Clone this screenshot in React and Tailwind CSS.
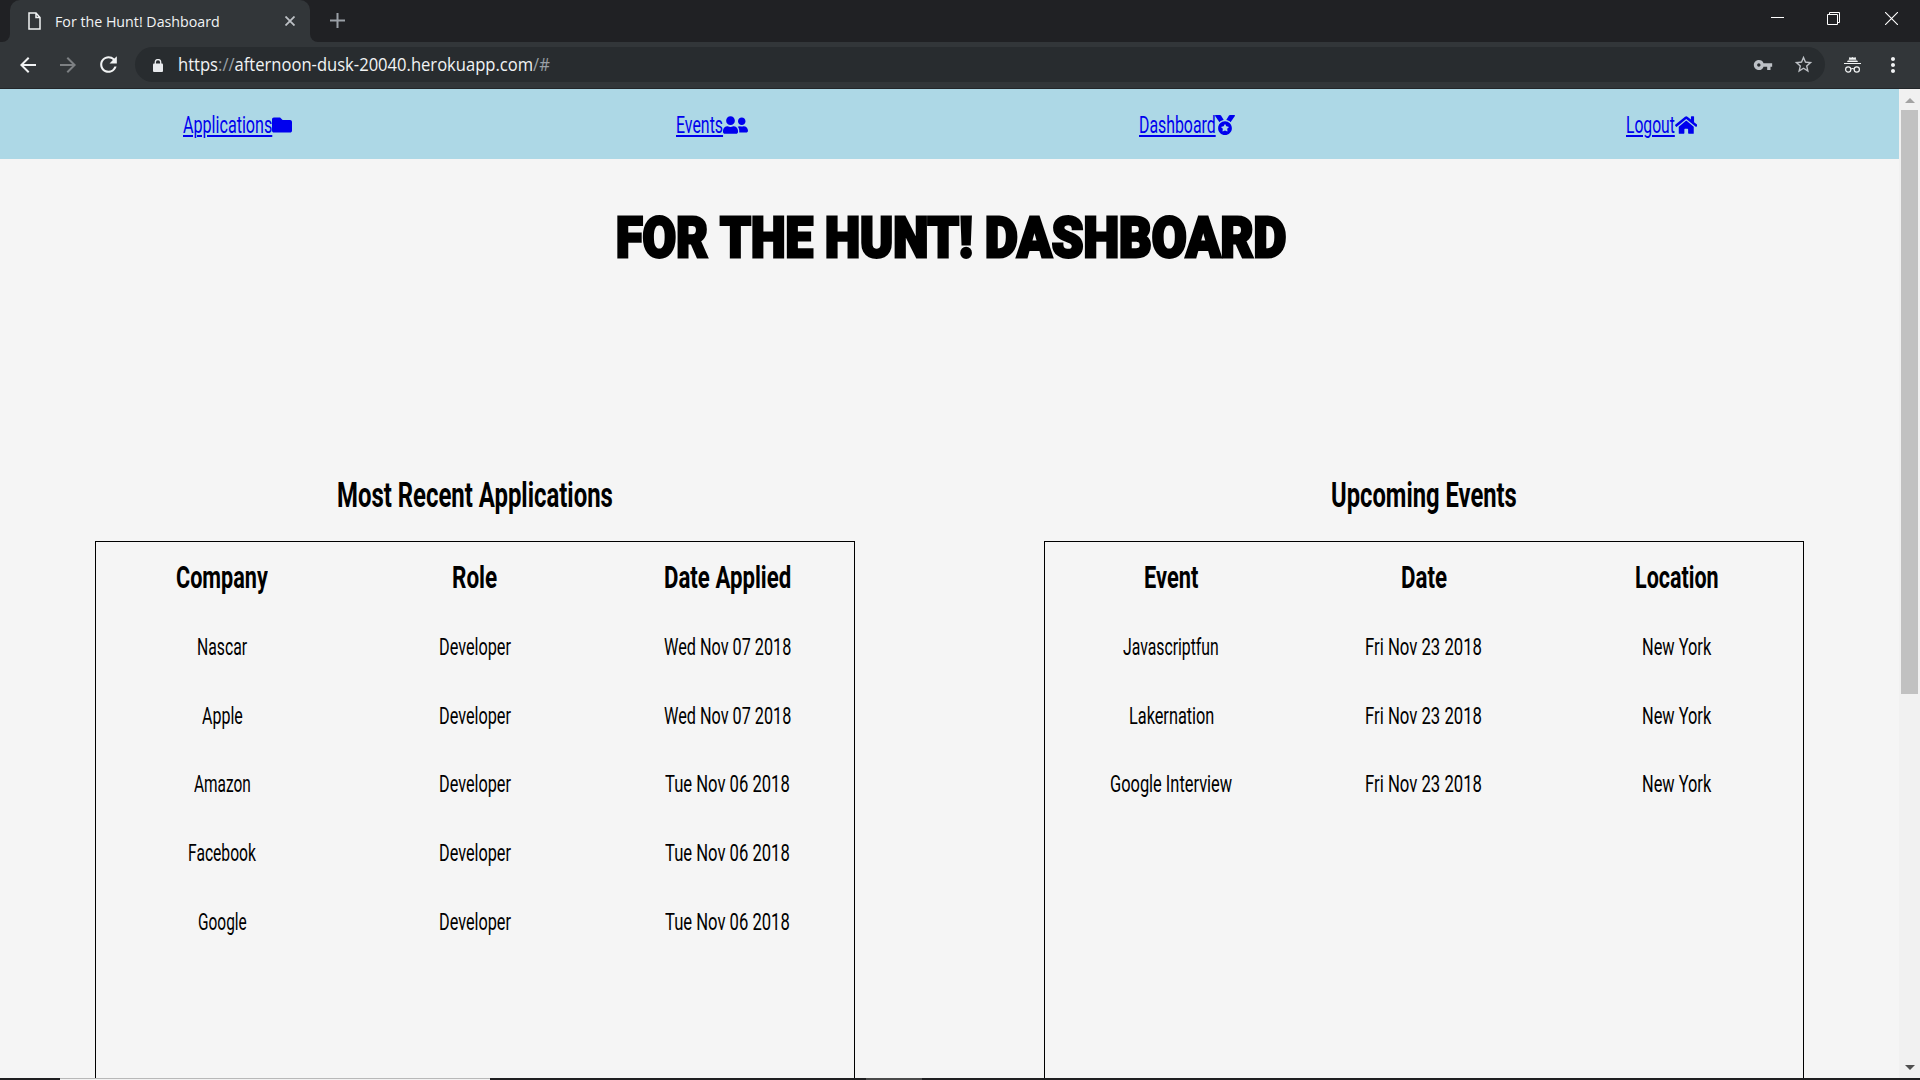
import { useLayoutEffect, useRef, useState } from "react";
import { FaFolder, FaUserFriends, FaMedal, FaHome } from "react-icons/fa";
import { MdVpnKey, MdStarBorder, MdMoreVert, MdArrowBack, MdArrowForward, MdRefresh } from "react-icons/md";

// Condenses a run of text horizontally so that it fills the given width.
function Fit({ width, className = "", children }) {
  const ref = useRef(null);
  const [scale, setScale] = useState(1);
  useLayoutEffect(() => {
    const measure = () => setScale(width / ref.current.offsetWidth);
    measure();
    document.fonts?.ready.then(measure);
  }, [width]);
  return (
    <span className="inline-block shrink-0 whitespace-nowrap" style={{ width }}>
      <span ref={ref} className={`inline-block origin-left whitespace-pre ${className}`} style={{ transform: `scaleX(${scale})` }}>
        {children}
      </span>
    </span>
  );
}

const nav = [
  { label: "Applications", width: 89, icon: <FaFolder className="-mt-[2px] h-5 w-5" /> },
  { label: "Events", width: 47, icon: <FaUserFriends className="-mt-[2px] h-5 w-[25px]" /> },
  { label: "Dashboard", width: 76.5, icon: <FaMedal className="-mt-[2px] h-5 w-5" /> },
  { label: "Logout", width: 49, icon: <FaHome className="-mt-[2px] h-5 w-[22.5px]" /> },
];

const dev = ["Developer", 72];
const wed = ["Wed Nov 07 2018", 127];
const tue = ["Tue Nov 06 2018", 125];
const fri = ["Fri Nov 23 2018", 117];
const ny = ["New York", 69];

const applications = {
  title: ["Most Recent Applications", 276],
  head: [["Company", 92], ["Role", 45], ["Date Applied", 127]],
  rows: [
    [["Nascar", 50], dev, wed],
    [["Apple", 41], dev, wed],
    [["Amazon", 57], dev, tue],
    [["Facebook", 68], dev, tue],
    [["Google", 49], dev, tue],
  ],
};

const events = {
  title: ["Upcoming Events", 186],
  head: [["Event", 54], ["Date", 46], ["Location", 84]],
  rows: [
    [["Javascriptfun", 96], fri, ny],
    [["Lakernation", 85], fri, ny],
    [["Google Interview", 122], fri, ny],
  ],
};

function Panel({ data }) {
  return (
    <section className="flex w-[760px] flex-col">
      <h2 className="mb-[20px] h-[50px] text-center text-[35px] font-bold leading-[50px]">
        <Fit width={data.title[1]}>{data.title[0]}</Fit>
      </h2>
      <div className="flex-1 border border-b-0 border-black">
        <div className="grid h-[71.6px] grid-cols-3 items-center pt-[1.4px] text-center text-[31.5px] font-bold leading-[40px]">
          {data.head.map(([t, w]) => (
            <div key={t}><Fit width={w}>{t}</Fit></div>
          ))}
        </div>
        {data.rows.map((row, i) => (
          <div key={i} className="grid h-[68.7px] grid-cols-3 items-center text-center text-[23px] font-[450] leading-[30px]">
            {row.map(([t, w]) => (
              <div key={t}><Fit width={w}>{t}</Fit></div>
            ))}
          </div>
        ))}
      </div>
    </section>
  );
}

function Chrome() {
  return (
    <header className="bg-[#202124] font-['Open_Sans',sans-serif]">
      <div className="flex h-[42px]">
        <div className="flex h-[42px] w-[10px] items-end bg-[#323639]"><div className="h-full w-full rounded-br-[8px] bg-[#202124]" /></div>
        <div className="flex w-[300px] items-center rounded-t-[10px] bg-[#323639] pl-[18px] text-[15px] text-[#f1f3f4]">
          <svg className="mr-[14px] h-[18px] w-[13px]" viewBox="0 0 13 18" fill="none" stroke="#f1f3f4" strokeWidth="1.5"><path d="M1 1h7l4 4.5V17H1zM8 1v4.5h4" /></svg>
          <Fit width={165} className="-mt-[3px] align-middle">For the Hunt! Dashboard</Fit>
          <svg className="ml-[65px] h-[10px] w-[10px]" viewBox="0 0 10 10" stroke="#bdc1c6" strokeWidth="1.8"><path d="M.5.5l9 9M9.5.5l-9 9" /></svg>
        </div>
        <div className="h-[42px] w-[10px] bg-[#323639]"><div className="h-full w-full rounded-bl-[8px] bg-[#202124]" /></div>
        <svg className="ml-[10px] mt-[13px] h-[15px] w-[15px]" viewBox="0 0 15 15" stroke="#9aa0a6" strokeWidth="2"><path d="M7.5 0v15M0 7.5h15" /></svg>
        <div className="ml-auto flex pr-[22px] pt-[12px]">
          <svg className="mr-[43px] h-[13px] w-[13px]" viewBox="0 0 13 13" stroke="#fff"><path d="M0 5.5h13" /></svg>
          <svg className="mr-[45px] h-[13px] w-[13px]" viewBox="0 0 13 13" fill="none" stroke="#fff"><path d="M.5 2.5h10v10H.5zM2.5 2.5v-2h10v10h-2" /></svg>
          <svg className="h-[13px] w-[13px]" viewBox="0 0 13 13" stroke="#fff" strokeWidth="1.1"><path d="M0 0l13 13M13 0L0 13" /></svg>
        </div>
      </div>
      <div className="flex h-[47px] border-b border-[#232629] bg-[#323639] pl-[16px] pt-[5px] text-[#f1f3f4]">
        <div className="flex h-[35px] w-[119px] items-center">
          <MdArrowBack className="h-6 w-6" />
          <MdArrowForward className="ml-4 h-6 w-6 text-[#7d8083]" />
          <MdRefresh className="ml-4 h-[25px] w-[25px]" />
        </div>
        <div className="flex h-[35px] w-[1690px] items-center rounded-full bg-[#282c2f] pl-[18px] pr-[11px]">
          <svg className="mr-[15px] mt-px h-[13px] w-[10px]" viewBox="0 0 10 13"><rect y="4.500" width="10" height="8.500" rx="1" fill="#e8eaed" /><path d="M2.300 5V3.300a2.700 2.700 0 0 1 5.400 0V5" fill="none" stroke="#e8eaed" strokeWidth="1.300" /></svg>
          <Fit width={372} className="text-[18px] leading-[24px]">
            <span>https</span><span className="text-[#9aa0a6]">://</span><span>afternoon-dusk-20040.herokuapp.com</span><span className="text-[#9aa0a6]">/#</span>
          </Fit>
          <MdVpnKey className="ml-auto h-5 w-5 text-[#bdc1c6]" />
          <MdStarBorder className="ml-5 h-[21px] w-[21px] text-[#bdc1c6]" />
        </div>
        <div className="flex h-[35px] items-center">
          <svg className="ml-[19px] h-[16px] w-[17px]" viewBox="0 0 17 16" fill="#f1f3f4"><path d="M5.500 0l1.500.7L8.500 0l1.500.7L11.500 0l.8 2.800H4.700zM3.800 3.400h9.400L14 5H3zM0 6h17v1H0z" /><g fill="none" stroke="#f1f3f4" strokeWidth="1.200"><circle cx="4.200" cy="12.500" r="2.600" /><circle cx="12.800" cy="12.500" r="2.600" /><path d="M6.800 12q1.700-1 3.400 0" /></g></svg>
          <MdMoreVert className="ml-[20px] h-6 w-6" />
        </div>
      </div>
    </header>
  );
}

export default function App() {
  return (
    <div className="flex h-[1080px] w-[1920px] flex-col overflow-hidden bg-[#f5f5f5] font-[Roboto,sans-serif] text-black">
      <Chrome />
      <div className="flex h-[989px]">
        <main className="flex w-[1899px] flex-col">
          <nav className="grid h-[70px] grid-cols-4 bg-[#add8e6] pt-[3px] text-[23px] font-[450] leading-[30px] text-[#0000ee]">
            {nav.map((n) => (
              <a key={n.label} href="#" className="flex items-center justify-center">
                <Fit width={n.width} className="underline decoration-2 underline-offset-2">{n.label}</Fit>
                {n.icon}
              </a>
            ))}
          </nav>
          <h1 className="mt-[39px] flex h-[80px] justify-center gap-[12px] pl-[2px] text-[56px] font-black uppercase leading-[80px] [-webkit-text-stroke:3px_black]">
            <Fit width={92}>For</Fit>
            <Fit width={93}>the</Fit>
            <Fit width={148}>Hunt!</Fit>
            <Fit width={301}>Dashboard</Fit>
          </h1>
          <div className="mt-[193px] flex flex-1 justify-between px-[95px]">
            <Panel data={applications} />
            <Panel data={events} />
          </div>
        </main>
        <aside className="flex w-[21px] flex-col items-center bg-[#f1f1f1]">
          <svg className="mt-[9px] h-[5px] w-[10px]" viewBox="0 0 10 5" fill="#a3a3a3"><path d="M0 5l5-5 5 5z" /></svg>
          <div className="mt-[7px] h-[584px] w-[17px] bg-[#c1c1c1]" />
          <svg className="mb-[8px] mt-auto h-[5px] w-[10px]" viewBox="0 0 10 5" fill="#505050"><path d="M0 0l5 5 5-5z" /></svg>
        </aside>
      </div>
      <footer className="flex h-[2px] bg-[#1f1f21]">
        <div className="ml-[60px] h-[2px] w-[430px] border-t border-[#b8b8b8] bg-[#f2f2f2]" />
        <div className="ml-[376px] h-[2px] w-[56px] bg-[#4a4a4a]" />
      </footer>
    </div>
  );
}
